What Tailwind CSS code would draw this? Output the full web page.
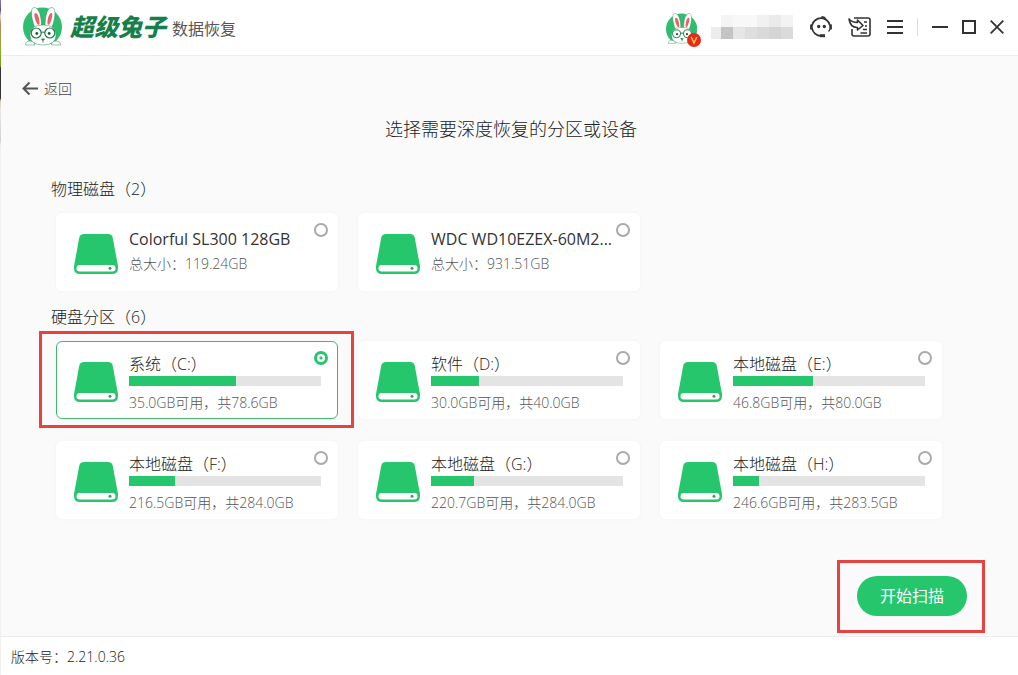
<!DOCTYPE html>
<html lang="zh-CN">
<head>
<meta charset="utf-8">
<meta name="viewport" content="width=device-width, initial-scale=1">
<title>超级兔子数据恢复</title>
<script src="https://cdn.jsdelivr.net/npm/@tailwindcss/browser@4"></script>
</head>
<body class="relative flex min-h-screen flex-col bg-[#fafafa] font-['Open_Sans','Noto_Sans_CJK_SC',sans-serif] font-light text-[#222]">

<svg class="hidden" aria-hidden="true">
  <symbol id="drive" viewBox="0 0 44 40">
    <path fill="#26c66c" d="M10 0H34Q38 0 38.7 3.5L44 32V34Q44 40 38 40H6Q0 40 0 34V32L5.300 3.500Q6 0 10 0Z"/>
    <rect x="2.500" y="31" width="39" height="6.500" rx="3.250" fill="#fff"/>
    <circle cx="36" cy="34.200" r="1.500" fill="#3f9c68"/>
  </symbol>
  <symbol id="rabbit" viewBox="0 0 40 40">
    <circle cx="19.500" cy="20" r="19.500" fill="#2fbe70"/>
    <rect x="1" y="37" width="38" height="3" fill="#fff"/>
    <g fill="#fff" stroke="#2c8a58" stroke-width=".5">
      <path d="M13 23C9 15 6 1 11 .5C16 0 18.500 10 18.500 19Z"/>
      <path d="M22 19C22 10 24 0 29 .5C34 1 32 15 27.500 23Z"/>
      <path d="M7 28C7 21 12 18 20 18S33 21 33 28Q33 38 20 38T7 28Z"/>
      <path d="M2.500 38Q2.500 34 7 34T12 38Z"/>
      <path d="M28.500 38Q28.500 34 33 34T38 38Z"/>
    </g>
    <path fill="#ee5f6a" d="M15 18C12 14 10 6 12.500 6S16.800 12 16.500 17Z M24.500 17C24.300 12 26 6 28.300 6S28.500 14 26 18Z"/>
    <g fill="#fff" stroke="#21784a" stroke-width="1.200">
      <circle cx="13.200" cy="26" r="5"/><circle cx="26.800" cy="26" r="5"/>
      <path d="M18.200 25.500Q20 24.500 21.800 25.500" fill="none"/>
    </g>
    <circle cx="13.800" cy="26.500" r="1.400" fill="#17633a"/><circle cx="26.200" cy="26.500" r="1.400" fill="#17633a"/>
    <path d="M18.500 32H21.500L20 33.500ZM20 33V35.500" fill="#21784a" stroke="#21784a" stroke-width=".8"/>
  </symbol>
</svg>

<span class="absolute top-0 bottom-0 left-0 w-px bg-[#f0f0f0]"></span>
<span class="absolute top-0 left-0 z-10 h-[146px] w-px bg-[linear-gradient(#8d84b8_0,#5c4a86_10px,#e8d8d0_16px,#b48a60_24px,#8fae2a_50px,#7c9a20_66px,#333_68px,#333_98px,#d8c8b0_101px,#e8e8e8_110px,#d0d0d0_140px,#f0f0f0_146px)]"></span>

<header class="flex h-14 items-center border-b border-[#ececec] bg-white pr-[14px] pb-[2px] pl-[23px]">
  <svg class="size-10" viewBox="0 0 40 40" aria-hidden="true"><use href="#rabbit"/></svg>
  <h1 class="ml-[7px] flex items-center">
    <span class="text-2xl leading-7 font-black text-[#16804a] italic">超级兔子</span>
    <span class="ml-[6px] pt-1 text-base leading-6 font-normal text-[#555]">数据恢复</span>
  </h1>
  <div class="ml-auto flex items-center">
    <div class="relative mr-2 pt-1">
      <svg class="size-8" viewBox="0 0 40 40" aria-hidden="true"><use href="#rabbit"/></svg>
      <svg class="absolute -right-[3px] -bottom-[2px] size-[14px]" viewBox="0 0 14 14" aria-hidden="true"><circle cx="7" cy="7" r="7" fill="#ea2a12"/><path d="M4.200 4L7 10L9.800 4" fill="none" stroke="#ffc36b" stroke-width="1.500"/></svg>
    </div>
    <svg class="ml-[5px] h-6 w-[82px]" viewBox="0 0 82 24" shape-rendering="crispEdges" aria-hidden="true">
      <path fill="#f4f4f4" d="M10 0h12v12H10z"/><path fill="#f8f8f8" d="M22 0h24v12H22z"/><path fill="#f1f1f1" d="M46 0h12v12H46z"/><path fill="#eaeaea" d="M58 0h12v12H58z"/><path fill="#f3f3f3" d="M70 0h12v12H70z"/>
      <path fill="#ececec" d="M0 12h10v12H0z"/><path fill="#c4c4c4" d="M10 12h12v12H10z"/><path fill="#e6e6e6" d="M22 12h12v12H22z"/><path fill="#dedede" d="M34 12h12v12H34z"/><path fill="#d9d9d9" d="M46 12h12v12H46z"/><path fill="#d5d5d5" d="M58 12h12v12H58z"/><path fill="#dbdbdb" d="M70 12h12v12H70z"/>
    </svg>
    <button type="button" aria-label="客服" class="ml-[17px]">
      <svg class="h-[22px] w-[22px]" viewBox="0 0 22 22" fill="none" stroke="#333" stroke-width="1.800" aria-hidden="true">
        <path d="M2 9.500A9.200 9.200 0 0 1 20 9.500M2 12A9.200 9.200 0 0 0 11 20"/><path d="M1.400 8.500V13.500M20.600 8.500V13.500" stroke-width="2.600"/><path d="M20 13Q19.500 14.500 18.500 15.500" stroke-width="1.200"/><path d="M10 19.700H15" stroke-width="3"/><path d="M11.500 1.200Q14 1.200 15.500 3" stroke-width="2.200"/><circle cx="8.700" cy="10.500" r=".8" fill="#333"/><circle cx="14.300" cy="10.500" r=".8" fill="#333"/>
      </svg>
    </button>
    <button type="button" aria-label="导入" class="ml-4">
      <svg class="h-[22px] w-[23px]" viewBox="0 0 23 22" fill="none" stroke="#333" stroke-width="1.600" stroke-linejoin="round" aria-hidden="true">
        <path d="M6 2H20Q22 2 22 4V18Q22 20 20 20H6Q4 20 4 18V13"/><path d="M1 3Q4 6.500 9.500 6.500V4L15 9.500L9.500 14V11.500Q2.500 12 1 3Z"/><path d="M16 6H19M17 10H19M15 13.500H19M12.500 17H19"/>
      </svg>
    </button>
    <button type="button" aria-label="菜单" class="ml-4">
      <svg class="h-5 w-4" viewBox="0 0 16 20" stroke="#333" stroke-width="2" aria-hidden="true"><path d="M0 4H16M0 10H16M0 16H16"/></svg>
    </button>
    <span class="ml-[14px] h-[18px] w-px bg-[#ddd]"></span>
    <button type="button" aria-label="最小化" class="ml-[14px]">
      <svg class="h-5 w-4" viewBox="0 0 16 20" stroke="#333" stroke-width="2" aria-hidden="true"><path d="M0 10H16"/></svg>
    </button>
    <button type="button" aria-label="最大化" class="ml-[14px]">
      <svg class="size-[14px]" viewBox="0 0 14 14" fill="none" stroke="#333" stroke-width="2" aria-hidden="true"><path d="M1 1H13V13H1Z"/></svg>
    </button>
    <button type="button" aria-label="关闭" class="ml-[14px]">
      <svg class="size-[14px]" viewBox="0 0 14 14" stroke="#333" stroke-width="1.800" aria-hidden="true"><path d="M.7 .7L13.300 13.300M13.300 .7L.7 13.300"/></svg>
    </button>
  </div>
</header>

<main class="flex grow flex-col">
  <a href="#" class="mt-[23px] ml-[22px] flex items-center gap-[6px] self-start text-sm text-[#444]">
    <svg class="h-4 w-4" viewBox="0 0 16 16" fill="none" stroke="#555" stroke-width="2" aria-hidden="true"><path d="M16 7.500H1.500M7.500 1.500L1.500 7.500L7.500 13.500"/></svg>
    返回
  </a>
  <h2 class="mt-4 pl-1 text-center text-lg leading-7">选择需要深度恢复的分区或设备</h2>

  <form class="flex grow flex-col" id="scan">
    <fieldset class="mt-[34px] pr-[76px] pl-14">
      <legend class="-ml-[5px] h-9 text-base leading-6">物理磁盘（2）</legend>
      <div class="grid grid-cols-3 gap-5">
        <label class="relative flex h-[78px] rounded-md bg-white pt-[21px] pr-[17px] pl-[18px] shadow-[0_0_3px_#f0f0f0]">
          <svg class="h-10 w-11 shrink-0" aria-hidden="true"><use href="#drive"/></svg>
          <span class="-mt-[7px] ml-[11px] min-w-0 grow"><span class="block text-base leading-6 font-normal whitespace-nowrap text-[#333]">Colorful SL300 128GB</span><span class="block text-sm leading-[26px] text-[#555]">总大小：119.24GB</span></span>
          <input type="radio" name="disk" class="absolute top-[10px] right-[10px] size-[14px] appearance-none rounded-full border-2 border-[#aaa]">
        </label>
        <label class="relative flex h-[78px] rounded-md bg-white pt-[21px] pr-[17px] pl-[18px] shadow-[0_0_3px_#f0f0f0]">
          <svg class="h-10 w-11 shrink-0" aria-hidden="true"><use href="#drive"/></svg>
          <span class="-mt-[7px] ml-[11px] min-w-0 grow"><span class="block text-base leading-6 font-normal whitespace-nowrap text-[#333]">WDC WD10EZEX-60M2...</span><span class="block text-sm leading-[26px] text-[#555]">总大小：931.51GB</span></span>
          <input type="radio" name="disk" class="absolute top-[10px] right-[10px] size-[14px] appearance-none rounded-full border-2 border-[#aaa]">
        </label>
      </div>
    </fieldset>

    <fieldset class="mt-[14px] pr-[76px] pl-14">
      <legend class="-ml-[5px] h-9 text-base leading-6">硬盘分区（6）</legend>
      <div id="volumes" class="grid grid-cols-3 gap-x-5 gap-y-[22px]"></div>
    </fieldset>

    <div class="mt-auto mr-[33px] mb-[3px] self-end border-3 border-[#e64340] pt-[13px] pr-[15px] pb-[14px] pl-[17px]">
      <button type="submit" class="block h-10 w-[110px] rounded-full bg-[#26c66c] text-base font-normal text-white">开始扫描</button>
    </div>
  </form>
</main>

<footer class="flex h-[39px] items-center border-t border-[#ececec] bg-white pt-[2px] pl-[11px] text-sm">版本号：2.21.0.36</footer>

<script>
const volumes = [
  ['系统（C:）', '35.0GB可用，共78.6GB', 55.7],
  ['软件（D:）', '30.0GB可用，共40.0GB', 25],
  ['本地磁盘（E:）', '46.8GB可用，共80.0GB', 41.5],
  ['本地磁盘（F:）', '216.5GB可用，共284.0GB', 24],
  ['本地磁盘（G:）', '220.7GB可用，共284.0GB', 22.5],
  ['本地磁盘（H:）', '246.6GB可用，共283.5GB', 13.5],
];
document.getElementById('volumes').innerHTML = volumes.map(([name, info, used], i) => `
  <label class="relative flex h-[78px] rounded-md bg-white pt-[21px] pr-[17px] pl-[18px] shadow-[0_0_3px_#f0f0f0] has-checked:outline has-checked:-outline-offset-1 has-checked:outline-[#3fb973]">
    <svg class="h-10 w-11 shrink-0" aria-hidden="true"><use href="#drive"/></svg>
    <span class="-mt-[10px] ml-[11px] min-w-0 grow">
      <span class="block text-base leading-6">${name}</span>
      <span class="block h-[10px] bg-[#e4e4e4]"><span class="block h-full bg-[#26c66c]" style="width:${used}%"></span></span>
      <span class="mt-[5px] block text-sm leading-6 text-[#555]">${info}</span>
    </span>
    <input type="radio" name="disk" ${i ? '' : 'checked'} class="absolute top-[10px] right-[10px] size-[14px] appearance-none rounded-full border-2 border-[#aaa] checked:border-[3px] checked:border-[#26c66c] checked:bg-[radial-gradient(circle,#26c66c_1px,white_2px)]">
    ${i ? '' : '<span class="pointer-events-none absolute -top-[10px] -right-4 -bottom-[9px] -left-[17px] border-3 border-[#e64340]"></span>'}
  </label>`).join('');
</script>
</body>
</html>
